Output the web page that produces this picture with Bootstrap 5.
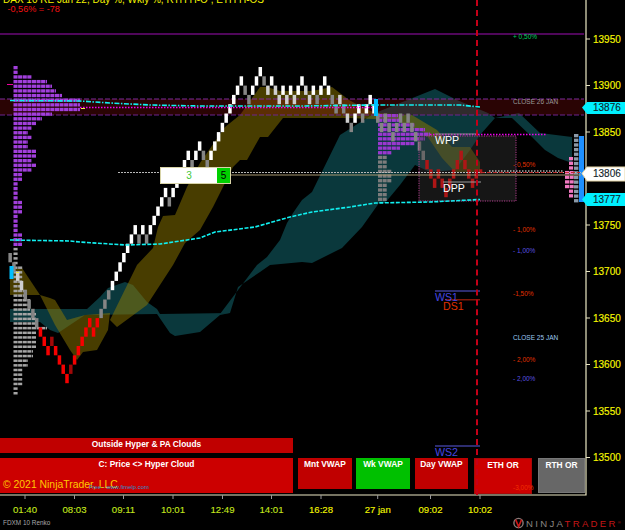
<!DOCTYPE html>
<html lang="en">
<head>
<meta charset="UTF-8">
<title>FDXM 10 Renko</title>
<link href="https://cdn.jsdelivr.net/npm/bootstrap@5.3.0/dist/css/bootstrap.min.css" rel="stylesheet">
<style>
  body { background: #000; font-family: "Liberation Sans", Arial, sans-serif; }
  .chart-shell { width: 625px; height: 530px; overflow: hidden; background: #000; }
  .chart-svg { position: absolute; left: 0; top: 0; }
  .chart-svg text { font-family: "Liberation Sans", Arial, sans-serif; }
  .price-lbl { font-size: 10px; fill: #f8f800; stroke: #f8f800; stroke-width: .15px; }
  .flag-lbl { font-size: 10px; fill: #10222a; stroke: #10222a; stroke-width: .12px; }
  .time-lbl { font-size: 9.6px; fill: #f4f800; stroke: #f4f800; stroke-width: .12px; text-anchor: middle; }
  .time-lbl-l { fill: #c4e61c; stroke: #c4e61c; }
  .small-lbl { font-size: 6.5px; }
  .pivot-lbl { font-size: 10.6px; }

  .signal-board { position: absolute; left: 0; top: 438px; width: 586px; color: #fff; font-weight: 700; font-size: 8.4px; line-height: 10px; text-align: center; }
  .signal-left { width: 293px; }
  .signal-tile { padding-top: 1px; }
  .sig-outside { height: 15px; background: #c00000; margin-bottom: 5px; }
  .sig-cloud { height: 35px; background: #cc0000; position: relative; }
  .sig-short { height: 31px; background: #c00000; }
  .sig-green { width: 54px; background: #00c000; }
  .sig-mnt { width: 54px; margin-left: 5px; }
  .sig-day { width: 53px; margin-left: 1px; }
  .sig-eth { width: 58px; height: 36px; background: #cc0000; border: 1px solid #a80808; margin-left: 2px; }
  .sig-rth { width: 47px; height: 35px; background: #676767; border: 1px solid #777; margin-left: 2px; }
  .tile-row { padding-top: 20px; }
  .copy-note { position: absolute; left: 3px; top: 21px; color: #ffc800; font-weight: 400; font-size: 10.4px; line-height: 12px; white-space: nowrap; }
  .web-note { position: absolute; left: 89px; top: 25px; color: #2a8fd0; font-weight: 400; font-size: 5.9px; line-height: 8px; white-space: nowrap; }

  .ticket-box { position: absolute; left: 160px; top: 167px; width: 71px; height: 17px; background: #fff; border: 1px solid #d8d4a8; font-size: 10px; line-height: 15px; }
  .ticket-qty { color: #3cc83c; }
  .ticket-fill { width: 13px; background: #00d000; color: #000; }

  .session-rule { position: absolute; left: 476px; top: 0; height: 495px; border-left: 2px dashed #c40018; }
</style>
</head>
<body class="m-0">
<div class="chart-shell position-relative">
  <svg id="plot" class="chart-svg" width="625" height="530" viewBox="0 0 625 530">
    <!-- clouds -->
    <g fill="#0a383c">
      <polygon points="220,314 257,265 267,257 280,240 287,223 293,213 302,200 312,192 340,135 375,113 435,89 457,100 488,113 495,118 519,113 540,133 572,137 572,163 558,158 545,150 532,137 512,118 495,118 480,135 470,150 455,170 430,172 415,165 400,185 385,203 379,203 362,227 342,248 312,263 302,262 270,265 260,272 238,287 230,313"/>
      <polygon points="10,309 87,309 100,297 108,288 125,282 133,285 147,302 157,309 160,314 230,313 220,315 200,332 175,336 170,333 157,314 85,315 67,327 58,333 50,330 40,322 10,322"/>
    </g>
    <g fill="#907a00" fill-opacity=".5">
      <polygon points="137,265 153,248 158,227 163,216 175,215 187,187 200,163 225,127 240,115 260,87 267,87 280,91 312,91 332,87 349,100 362,107 375,113 412,115 437,130 452,147 470,147 480,162 480,172 455,172 442,158 425,133 395,120 350,118 283,118 268,137 260,137 247,160 240,160 233,167 213,207 200,230 185,243 173,265 160,285 147,305 117,327 110,320"/>
      <polygon points="10,270 22,268 40,295 10,295"/>
      <polygon points="40,295 50,298 55,300 67,320 85,315 110,313 108,330 97,350 83,352 77,360 70,350 55,325 45,305"/>
    </g>
    <!-- close 26 jan band -->
    <rect x="0" y="99" width="584" height="16" fill="#8a0c0c" fill-opacity=".3"/>
    <line x1="0" y1="99" x2="584" y2="99" stroke="#7d2a9a" stroke-width="1.2" stroke-dasharray="5 2"/>
    <line x1="0" y1="115" x2="584" y2="115" stroke="#6d2590" stroke-width="1.2" stroke-dasharray="5 2"/>
    <line x1="0" y1="34" x2="584" y2="34" stroke="#6a0a78" stroke-width="1.6"/>
    <g id="profiles"></g>
    <g id="bricks"></g>
    <!-- gap box + pivots -->
    <rect x="419" y="136" width="97" height="65" fill="#3a3a3a" fill-opacity=".38" stroke="#b03c8c" stroke-dasharray="1.2 1.2"/>
    <line x1="430" y1="134.5" x2="547" y2="134.5" stroke="#f000f0" stroke-width="1.3" stroke-dasharray="1.5 1.5"/>
    <line x1="80" y1="107.5" x2="372" y2="107.5" stroke="#f000f0" stroke-width="1.3" stroke-dasharray="1.5 1.5"/>
    <line x1="435" y1="134" x2="478" y2="134" stroke="#888" stroke-width="1.2"/>
    <line x1="443" y1="182" x2="481" y2="182" stroke="#999" stroke-width="1.2"/>
    <line x1="435" y1="291" x2="480" y2="291" stroke="#3c3c94" stroke-width="1.4"/>
    <line x1="445" y1="299.7" x2="480" y2="299.7" stroke="#801808" stroke-width="1.4"/>
    <line x1="435" y1="446" x2="480" y2="446" stroke="#3c3c94" stroke-width="1.4"/>
    <!-- vwap -->
    <polyline fill="none" stroke="#10f0f0" stroke-width="1.6" stroke-dasharray="5 1.5 1.5 1.5" points="10,100.5 80,101 110,103 150,105 200,106 300,106 372,105 460,105 480,107"/>
    <polyline fill="none" stroke="#10f0f0" stroke-width="1.6" stroke-dasharray="4 1.5" points="10,240 70,241 80,242 125,245 160,244 200,238 215,232 255,227 290,217 312,212 350,207 375,203 430,202 450,201 480,199.5"/>
    <!-- last price lines -->
    <line x1="118" y1="172.5" x2="581" y2="172.5" stroke="#b8b8b8" stroke-dasharray="2 1"/>
    <line x1="231" y1="175" x2="581" y2="175" stroke="#a89870"/>
    <line x1="489" y1="171" x2="564" y2="171" stroke="#fff" stroke-width="1.2" stroke-dasharray="1.5 1.5"/>
    <line x1="481" y1="172.5" x2="580" y2="172.5" stroke="#c03030" stroke-dasharray="4 2"/>
    <!-- small marks -->
    <rect x="7" y="84" width="6" height="1" fill="#f000a0"/>
    <rect x="81" y="108" width="4" height="1" fill="#f0f040"/>
    <rect x="16" y="272" width="3" height="1" fill="#f0f040"/>
    <rect x="9.5" y="266" width="4" height="13" fill="#00bfff"/>
    <rect x="374" y="99" width="4" height="17" fill="#00bfff"/>
    <!-- header -->
    <text x="3" y="3" font-size="10" fill="#f4f400">DAX 10 RE Jan 22, Day %, Wkly %, RTH H-O , ETH H-OS</text>
    <text x="7.5" y="12" font-size="9.1" fill="#f41010">-0,56% = -78</text>
    <!-- level notes -->
    <text class="small-lbl" x="513" y="38.8" fill="#00d060">+ 0,50%</text>
    <text class="small-lbl" x="513" y="103.5" fill="#9a9a9a">CLOSE 26 JAN</text>
    <text class="small-lbl" x="513" y="167" fill="#e03000">- 0,50%</text>
    <text class="small-lbl" x="513" y="232" fill="#e03000">- 1,00%</text>
    <text class="small-lbl" x="513" y="252.8" fill="#5a50e0">- 1,00%</text>
    <text class="small-lbl" x="513" y="296" fill="#e03000">-1,50%</text>
    <text class="small-lbl" x="513" y="339.5" fill="#9cc8f0">CLOSE 25 JAN</text>
    <text class="small-lbl" x="513" y="361.5" fill="#e03000">- 2,00%</text>
    <text class="small-lbl" x="513" y="380.5" fill="#5a50e0">- 2,00%</text>
    <text class="pivot-lbl" x="435" y="144" fill="#fff">WPP</text>
    <text class="pivot-lbl" x="443" y="192" fill="#fff">DPP</text>
    <text class="pivot-lbl" x="435" y="301" fill="#4646e0">WS1</text>
    <text class="pivot-lbl" x="443" y="310" fill="#e03000">DS1</text>
    <text class="pivot-lbl" x="435" y="456" fill="#4646e0">WS2</text>
    <!-- axes -->
    <g id="axes"></g>
    <!-- price flags -->
    <polygon points="625,102 587,102 582,107.5 587,114 625,114" fill="#00f0ff"/>
    <polygon points="625,167 587,167 582,173.5 587,181 625,181" fill="#fff" stroke="#e8d8a8"/>
    <polygon points="625,193 587,193 582,199.5 587,206 625,206" fill="#00f0ff"/>
    <text class="flag-lbl" x="593" y="111">13876</text>
    <text class="flag-lbl" x="593" y="177">13806</text>
    <text class="flag-lbl" x="593" y="203">13777</text>
    <!-- footer -->
    <text x="3" y="525.3" font-size="6.4" fill="#a8a8a8">FDXM 10 Renko</text>
    <g fill="none">
      <circle cx="518.5" cy="523" r="4.6" stroke="#8a7a78" stroke-width="1.4"/>
      <path d="M515.6 519.6 L518.6 526.6 L521.6 519.6" stroke="#c81818" stroke-width="1.6"/>
    </g>
    <text x="526" y="527" font-size="9.6" letter-spacing="2.3" fill="#8a8580">NINJA<tspan fill="#c41616">TRADER</tspan><tspan font-size="4" letter-spacing="0" fill="#c41616" dy="-3">®</tspan></text>
  </svg>

  <div class="signal-board d-flex">
    <div class="signal-left flex-shrink-0">
      <div class="sig-outside signal-tile">Outside Hyper &amp; PA Clouds</div>
      <div class="sig-cloud signal-tile">C: Price &lt;&gt; Hyper Cloud
        <span class="copy-note">© 2021 NinjaTrader, LLC</span>
        <span class="web-note">Free - www.fimelp.com</span>
      </div>
    </div>
    <div class="tile-row d-flex align-items-start gap-1">
      <div class="sig-short sig-mnt signal-tile">Mnt VWAP</div>
      <div class="sig-short sig-green signal-tile">Wk VWAP</div>
      <div class="sig-short sig-day signal-tile">Day VWAP</div>
      <div class="sig-eth signal-tile">ETH OR</div>
      <div class="sig-rth signal-tile">RTH OR</div>
    </div>
  </div>

  <div class="session-rule"></div>
  <svg class="chart-svg" width="625" height="530" viewBox="0 0 625 530">
    <text class="small-lbl" x="513" y="490" fill="#f03000">-3,00%</text>
  </svg>

  <div class="ticket-box d-flex text-center">
    <div class="ticket-qty flex-grow-1">3</div>
    <div class="ticket-fill">5</div>
  </div>
</div>

<script src="https://cdn.jsdelivr.net/npm/bootstrap@5.3.0/dist/js/bootstrap.bundle.min.js"></script>
<script>
  const NS = 'http://www.w3.org/2000/svg';
  function add(parent, tag, attrs, text) {
    const el = document.createElementNS(NS, tag);
    for (const k in attrs) el.setAttribute(k, attrs[k]);
    if (text) el.textContent = text;
    parent.appendChild(el);
    return el;
  }

  // renko bricks: level (0 = top, 9.3px each) per bar
  const levels = [20,21,22,23,24,25,26,27,28,29,30,29,30,31,32,33,32,31,30,29,28,27,28,27,26,25,24,23,22,21,20,19,18,17,18,17,18,17,16,15,14,13,14,13,12,11,10,9,10,9,8,9,10,9,8,7,6,5,4,3,2,1,2,3,2,1,0,1,2,1,2,3,2,3,2,3,2,1,2,3,2,3,2,1,2,3,4,3,4,5,6,5,4,5,4,3,4,5,6,5,6,7,6,5,6,5,6,7,8,9,10,11,12,11,12,13,12,11,10,9,10,11,12,11];
  const grey = new Set([0,1,4,5,6,7,24,25,26,34,36,42,48,51,52,62,63,67,81,85,86,88,90,93,97,98,99,100,101,102,103,104,105,106,107,108,109]);
  const pale = new Set([2,3,68,70,71,73,75,78,79,87,89]);
  const dark = new Set([11,16]);
  const bricks = document.getElementById('bricks');
  levels.forEach((lv, i) => {
    const x = 8.4 + 3.79 * i;
    let fill = '#fff';
    if (i >= 8 && i <= 23 || i >= 110) fill = '#f60000';
    if (dark.has(i)) fill = '#a00808';
    if (grey.has(i)) fill = '#858585';
    if (pale.has(i)) fill = '#cfcfcf';
    add(bricks, 'rect', { x: x, y: 67 + lv * 9.3, width: 3.5, height: 9.3, fill: fill });
  });
  add(bricks, 'rect', { x: 478.8, y: 169.3, width: 3.5, height: 4, fill: '#f60000' });

  // volume profiles, one row every 4.65px, cut in cells
  const prof = document.getElementById('profiles');
  function row(x0, x1, y, fill, h) {
    for (let x = x0; x < x1 - 0.5; x += 4.6) {
      add(prof, 'rect', { x: x, y: y, width: Math.min(4.1, x1 - x), height: h || 3.3, fill: fill });
    }
  }
  const leftEnds = [18,18,32,47,52,56,62,80,80,80,52,42,37,32,28,32,28,28,37,37,32,37,32,22,22,18,18,18,18,22,22,22,18,18,18,18,22,22,22,
    18,18,18,18,23,23,23,23,23,27,27,30,30,30,37,37,37,47,37,37,37,37,33,33,28,28,23,23,23,23,18,18];
  leftEnds.forEach((end, r) => {
    if (r < 39) row(13.5, end, 66 + 4.65 * r, '#a23fdc');
    else row(13.5, end, 66.5 + 4.65 * r, '#a4a4a4', 2.5);
  });

  const midRows = [[114,398],[118.6,402],[123.3,415],[128,425],[132.6,430],[137.2,425],[141.9,415],[146.5,400],[151.1,392]];
  midRows.forEach(m => row(378, m[1], m[0], '#9a38d0'));
  for (let y = 155.8; y < 202; y += 4.65) row(378, y > 168 && y < 180 ? 392 : 387, y, '#7c7c7c');

  for (let y = 134; y < 203; y += 4.65) add(prof, 'rect', { x: 574, y: y, width: 4.4, height: 3.3, fill: '#8c9aa8' });
  for (let y = 157; y < 195; y += 4.65) {
    const left = y > 170 && y < 186 ? 565 : 569;
    row(left, 574, y, '#f078c0');
  }
  add(prof, 'rect', { x: 579, y: 136, width: 5, height: 66, fill: '#1e90ff' });

  // axes
  const axes = document.getElementById('axes');
  add(axes, 'path', { d: 'M586 0V495H0', fill: 'none', stroke: '#ece8c4', 'stroke-width': 1.2 });
  for (let p = 13950; p >= 13500; p -= 50) {
    if (p === 13800) continue;
    const y = 39 + (13950 - p) * 0.93;
    add(axes, 'line', { x1: 586, x2: 590, y1: y, y2: y, stroke: '#e8e4c0' });
    add(axes, 'text', { class: 'price-lbl', x: 593, y: y + 3.5 }, String(p));
  }
  const times = [[25,'01:40'],[74.5,'08:03'],[123.5,'09:11'],[173,'10:01'],[222.5,'12:49'],[271.5,'14:01'],[321,'16:28'],[377.7,'27 jan'],[430.5,'09:02'],[480,'10:02']];
  times.forEach((t, i) => {
    add(axes, 'line', { x1: t[0], x2: t[0], y1: 495, y2: 499, stroke: '#999' });
    add(axes, 'text', { class: 'time-lbl' + (i < 6 ? ' time-lbl-l' : ''), x: t[0], y: 513 }, t[1]);
  });
</script>
</body>
</html>
